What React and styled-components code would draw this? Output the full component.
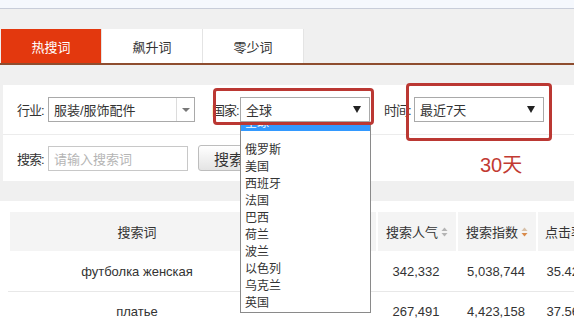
import React from 'react';
import styled, { createGlobalStyle } from 'styled-components';

const GlobalStyle = createGlobalStyle`
  body {
    margin: 0;
    background: #f0f0f0;
    font-family: "Liberation Sans", "Noto Sans CJK SC", sans-serif;
    color: #333;
  }
`;

const Page = styled.div`
  position: relative;
  width: 574px;
  height: 328px;
  overflow: hidden;
  background: #f0f0f0;
`;

const TopStrip = styled.div`
  height: 8px;
  background: #f5f8fd;
  border-bottom: 1px solid #c8cdd9;
  margin-bottom: 20px;
`;

const TabBar = styled.div`
  display: flex;
  height: 34px;
  padding-left: 1px;
  border-bottom: 2px solid #8e4d2f;
`;

const Tab = styled.div`
  width: 100px;
  display: flex;
  align-items: center;
  justify-content: center;
  font-size: 13px;
  border-right: 1px solid #e4e4e4;
  background: ${({ active }) => (active ? '#e3380e' : '#fff')};
  color: ${({ active }) => (active ? '#fff' : '#333')};
`;

const FilterPanel = styled.div`
  margin: 20px 0 0 3px;
  background: #fff;
`;

const FilterRow = styled.div`
  display: flex;
  align-items: center;
  height: ${({ h }) => h}px;
  padding-left: 14px;
  border-bottom: ${({ divided }) => (divided ? '1px solid #ececec' : 'none')};
`;

const Label = styled.span`
  flex: none;
  width: ${({ w }) => w}px;
  font-size: 13px;
  letter-spacing: -1px;
  color: #333;
  margin-left: ${({ gap }) => gap || 0}px;
  white-space: nowrap;
`;

const Select = styled.div`
  position: relative;
  flex: none;
  box-sizing: border-box;
  display: flex;
  align-items: center;
  width: ${({ w }) => w}px;
  height: 25px;
  border: 1px solid #a9a9a9;
  background: #fff;
  font-size: 13px;
  padding-left: 5px;
  z-index: 2;
`;

const SelectText = styled.span`
  flex: 1;
  white-space: nowrap;
`;

const SplitArrow = styled.span`
  align-self: stretch;
  width: 17px;
  border-left: 1px solid #dcdcdc;
  display: flex;
  align-items: center;
  justify-content: center;
  &::after {
    content: '';
    border-left: 4px solid transparent;
    border-right: 4px solid transparent;
    border-top: 4px solid #777;
  }
`;

const BlackArrow = styled.span`
  width: 0;
  height: 0;
  margin-right: 8px;
  border-left: 4px solid transparent;
  border-right: 4px solid transparent;
  border-top: 7px solid #222;
`;

const Input = styled.div`
  box-sizing: border-box;
  width: 140px;
  height: 25px;
  border: 1px solid #c8c8c8;
  font-size: 13px;
  color: #b5b5b5;
  padding-left: 5px;
  display: flex;
  align-items: center;
`;

const Button = styled.div`
  box-sizing: border-box;
  margin-left: 10px;
  width: 56px;
  height: 26px;
  border: 1px solid #bdbdbd;
  border-radius: 3px;
  background: linear-gradient(#ffffff, #e4e4e4);
  font-size: 15px;
  color: #333;
  padding-left: 15px;
  display: flex;
  align-items: center;
`;

const Dropdown = styled.div`
  position: absolute;
  top: calc(100% + 1px);
  left: -1px;
  width: 131px;
  box-sizing: border-box;
  background: #fff;
  border: 1px solid #8a8a8a;
  border-top: none;
  z-index: 3;
`;

const FirstOption = styled.div`
  height: 9px;
  overflow: hidden;
  background: #3399ff;
  color: #fff;
  font-size: 12px;
  padding-left: 4px;
  line-height: 2px;
  margin-bottom: 11px;
`;

const Option = styled.div`
  height: 17px;
  line-height: 17px;
  font-size: 12px;
  color: #333;
  padding-left: 4px;
`;

const TableCard = styled.div`
  margin-top: 20px;
  background: #fff;
  padding: 11px 0 0 10px;
  height: 200px;
`;

const Grid = styled.div`
  display: grid;
  grid-template-columns: 254px 112px 80px 80px 65px;
  width: max-content;
  height: ${({ h }) => h}px;
  background: ${({ head }) => (head ? '#f4f4f4' : '#fff')};
  border-bottom: ${({ line }) => (line ? '1px solid #e8e8e8' : 'none')};
  margin-left: ${({ head }) => (head ? 0 : -2)}px;
  padding-left: ${({ head }) => (head ? 0 : 2)}px;
`;

const Cell = styled.div`
  display: flex;
  align-items: center;
  justify-content: center;
  font-size: 13px;
  color: #333;
  white-space: nowrap;
  border-left: ${({ sep }) => (sep ? '2px solid #fff' : 'none')};
`;

const SortIcon = ({ active }) => (
  <svg width="7" height="10" viewBox="0 0 7 10" style={{ marginLeft: 3 }}>
    <path d="M3.5 0.5 L6.5 4 L0.5 4 Z" fill={active ? '#d7c0a8' : '#b4b4b4'} />
    <path d="M3.5 9.5 L6.5 6 L0.5 6 Z" fill={active ? '#d98a4a' : '#b4b4b4'} />
  </svg>
);

const Mark = styled.div`
  position: absolute;
  left: ${({ x }) => x}px;
  top: ${({ y }) => y}px;
  width: ${({ w }) => w}px;
  height: ${({ h }) => h}px;
  box-sizing: border-box;
  border: 3px solid #bb3833;
  border-radius: 4px;
  z-index: 4;
`;

const Note = styled.div`
  position: absolute;
  left: 480px;
  top: 149px;
  font-size: 20px;
  color: #c23a32;
`;

const countries = ['俄罗斯', '美国', '西班牙', '法国', '巴西', '荷兰', '波兰', '以色列', '乌克兰', '英国'];

const rows = [
  { word: 'футболка женская', pop: '342,332', idx: '5,038,744', ctr: '35.42%' },
  { word: 'платье', pop: '267,491', idx: '4,423,158', ctr: '37.56%' },
];

export default function App() {
  return (
    <Page>
      <GlobalStyle />
      <TopStrip />
      <TabBar>
        <Tab active>热搜词</Tab>
        <Tab>飙升词</Tab>
        <Tab>零少词</Tab>
      </TabBar>

      <FilterPanel>
        <FilterRow h={49} divided>
          <Label w={31}>行业:</Label>
          <Select w={147}>
            <SelectText>服装/服饰配件</SelectText>
            <SplitArrow />
          </Select>
          <Label w={28} gap={17}>国家:</Label>
          <Select w={130}>
            <SelectText>全球</SelectText>
            <BlackArrow />
            <Dropdown>
              <FirstOption>全球</FirstOption>
              {countries.map((c) => (
                <Option key={c}>{c}</Option>
              ))}
            </Dropdown>
          </Select>
          <Label w={30} gap={14}>时间:</Label>
          <Select w={130}>
            <SelectText>最近7天</SelectText>
            <BlackArrow />
          </Select>
        </FilterRow>
        <FilterRow h={46}>
          <Label w={31}>搜索:</Label>
          <Input>请输入搜索词</Input>
          <Button>搜索</Button>
        </FilterRow>
      </FilterPanel>

      <TableCard>
        <Grid head h={39}>
          <Cell>搜索词</Cell>
          <Cell sep />
          <Cell sep>
            搜索人气
            <SortIcon />
          </Cell>
          <Cell sep>
            搜索指数
            <SortIcon active />
          </Cell>
          <Cell sep>
            点击率
            <SortIcon />
          </Cell>
        </Grid>
        {rows.map((r, i) => (
          <Grid key={r.word} h={i === 0 ? 40 : 39} line={i === 0}>
            <Cell>{r.word}</Cell>
            <Cell />
            <Cell>{r.pop}</Cell>
            <Cell>{r.idx}</Cell>
            <Cell>{r.ctr}</Cell>
          </Grid>
        ))}
      </TableCard>

      <Mark x={213} y={88} w={161} h={37} />
      <Mark x={406} y={83} w={146} h={58} />
      <Note>30天</Note>
    </Page>
  );
}
